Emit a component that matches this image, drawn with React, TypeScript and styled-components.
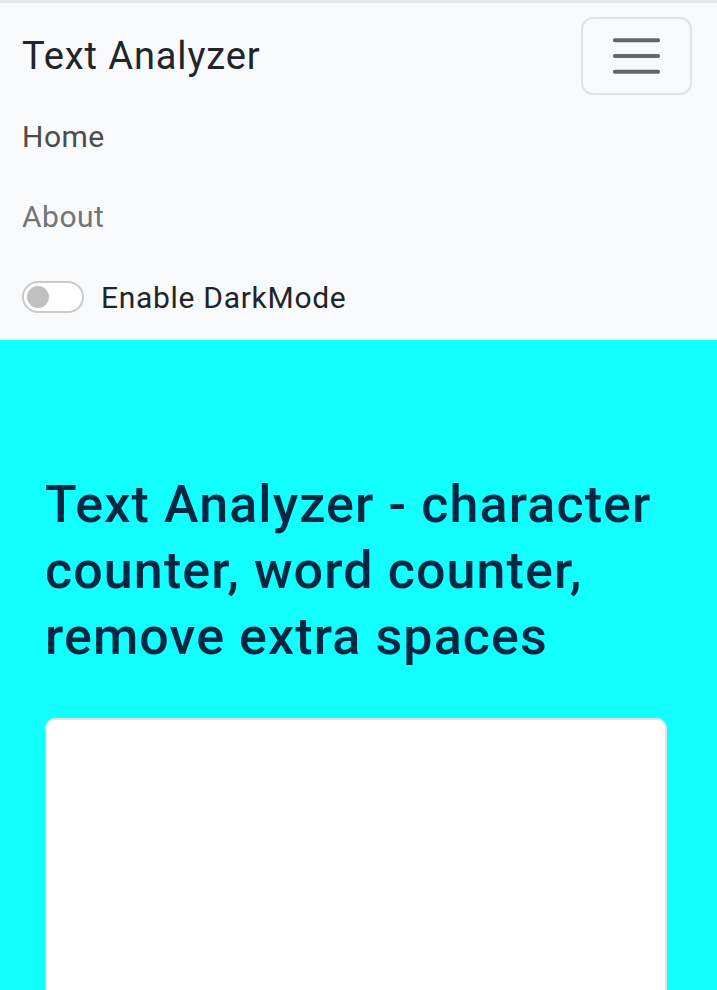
import React from "react";
import styled, { createGlobalStyle } from "styled-components";

const Global = createGlobalStyle`
  html, body { margin: 0; padding: 0; }
  body {
    background: #11ffff;
    font-family: Roboto, "Noto Sans", "Liberation Sans", sans-serif;
    color: #212529;
  }
  * { box-sizing: border-box; }
`;

const Navbar = styled.nav`
  background: #f8f9fa;
  border-top: 3px solid #e4e5e7;
  padding: 14px 25px 3px 22px;
`;

const TopRow = styled.div`
  display: flex;
  align-items: center;
  justify-content: space-between;
`;

const Brand = styled.a`
  font-size: 38px;
  line-height: 48px;
  letter-spacing: 0.9px;
  color: #212529;
  text-decoration: none;
`;

const Toggler = styled.button`
  width: 111px;
  height: 78px;
  padding: 8px 24px;
  border: 2px solid #e1e2e4;
  border-radius: 12px;
  background: transparent;
  display: flex;
  align-items: center;
  justify-content: center;
`;

const NavList = styled.ul`
  list-style: none;
  margin: 2px 0 0;
  padding: 0;
  display: flex;
  flex-direction: column;
`;

const NavLink = styled.a<{ $active?: boolean }>`
  display: block;
  padding: 16px 0;
  font-size: 30px;
  line-height: 48px;
  letter-spacing: 0.5px;
  color: ${(p) => (p.$active ? "#4b4c4d" : "#737475")};
  text-decoration: none;
`;

const SwitchRow = styled.label`
  display: flex;
  align-items: center;
  gap: 17px;
  height: 80px;
  font-size: 30px;
  letter-spacing: 0.7px;
  color: #212529;
`;

const SwitchTrack = styled.span`
  width: 62px;
  height: 32px;
  border: 2px solid #c9c9c9;
  border-radius: 16px;
  background: #fff;
  display: flex;
  align-items: center;
  padding-left: 3px;
`;

const SwitchKnob = styled.span`
  width: 22px;
  height: 22px;
  border-radius: 50%;
  background: #c0c0c0;
`;

const AlertSpace = styled.div`
  height: 100px;
`;

const Container = styled.main`
  padding: 32px 50px 0 45px;
`;

const Heading = styled.h1`
  margin: 0 0 48px;
  font-size: 52px;
  line-height: 66px;
  font-weight: 500;
  letter-spacing: 1.1px;
  color: #042743;
`;

const TextArea = styled.textarea`
  display: block;
  width: 100%;
  height: 420px;
  border: 2px solid #dee2e6;
  border-radius: 10px;
  background: #fff;
  resize: none;
  outline: none;
  padding: 12px 24px;
  font-family: inherit;
  font-size: 30px;
`;

export default function App() {
  return (
    <>
      <Global />
      <Navbar>
        <TopRow>
          <Brand href="#">Text Analyzer</Brand>
          <Toggler aria-label="Toggle navigation">
            <svg width="60" height="60" viewBox="0 0 30 30">
              <path
                d="M4 7h22M4 15h22M4 23h22"
                stroke="#636567"
                strokeWidth="2"
                strokeLinecap="round"
                fill="none"
              />
            </svg>
          </Toggler>
        </TopRow>
        <NavList>
          <li>
            <NavLink href="#" $active>
              Home
            </NavLink>
          </li>
          <li>
            <NavLink href="#">About</NavLink>
          </li>
          <li>
            <SwitchRow>
              <SwitchTrack>
                <SwitchKnob />
              </SwitchTrack>
              Enable DarkMode
            </SwitchRow>
          </li>
        </NavList>
      </Navbar>
      <AlertSpace />
      <Container>
        <Heading>
          Text Analyzer - character counter, word counter, remove extra spaces
        </Heading>
        <TextArea />
      </Container>
    </>
  );
}
